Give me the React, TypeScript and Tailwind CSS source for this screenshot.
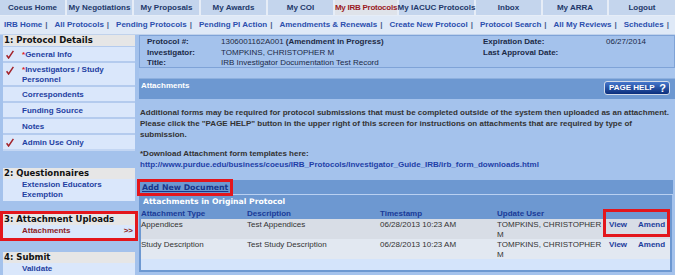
import React from "react";

const tabs: { label: string; w: string; active?: boolean }[] = [
  { label: "Coeus Home", w: "w-[67px]" },
  { label: "My Negotiations", w: "w-[67px]" },
  { label: "My Proposals", w: "w-[67px]" },
  { label: "My Awards", w: "w-[67px]" },
  { label: "My COI", w: "w-[67px]" },
  { label: "My IRB Protocols", w: "w-[64px]", active: true },
  { label: "My IACUC Protocols", w: "w-[77px]" },
  { label: "Inbox", w: "w-[67px]" },
  { label: "My ARRA", w: "w-[66px]" },
  { label: "Logout", w: "w-[66px]" },
];

const links = [
  "IRB Home",
  "All Protocols",
  "Pending Protocols",
  "Pending PI Action",
  "Amendments & Renewals",
  "Create New Protocol",
  "Protocol Search",
  "All My Reviews",
  "Schedules",
];

function Check() {
  return (
    <svg width="8" height="9" viewBox="0 0 8 9" className="block">
      <path d="M0.6 5.2 L2.6 8 L7.4 0.8" fill="none" stroke="#a3222a" strokeWidth="1.5" />
    </svg>
  );
}

function Item({
  children,
  check,
  two,
  className = "",
}: {
  children: React.ReactNode;
  check?: boolean;
  two?: boolean;
  className?: string;
}) {
  return (
    <div
      className={
        "flex bg-[#dae7fb] font-bold text-[#1f3fa2] " +
        (two ? "pt-[2px] leading-[10px] " : "pt-[2px] pb-[1px] leading-[11px] ") +
        className
      }
    >
      <div className="flex w-[19px] shrink-0 pl-[3px] pt-[1px]">{check ? <Check /> : null}</div>
      <div className="min-w-0 flex-1">{children}</div>
    </div>
  );
}

function Sep() {
  return <div className="h-[2px] bg-[#b4cbee]" />;
}

function Header({ children }: { children: React.ReactNode }) {
  return (
    <div className="h-[11px] bg-[#e6e6e6] pl-[1px] font-['DejaVu_Sans'] text-[8.5px] font-bold leading-[11px] text-[#111]">
      {children}
    </div>
  );
}

export default function App() {
  return (
    <div className="h-[275px] w-[675px] overflow-hidden bg-[#a4c2ec] font-['Liberation_Sans',Arial,sans-serif] text-[8px]">
      {/* top tabs */}
      <div className="flex h-[16px] bg-[#e6edf7]">
        {tabs.map((t, i) => (
          <div
            key={t.label}
            className={
              t.w +
              " flex h-[15px] shrink-0 items-center justify-center whitespace-nowrap font-bold " +
              (i < tabs.length - 1 ? "border-r-2 border-[#e6edf7] " : "") +
              (t.active ? "bg-[#dfe3ea] text-[#9b1b1f] tracking-[-0.25px]" : "bg-[#c4d5ed] text-[#22386a]")
            }
          >
            {t.label}
          </div>
        ))}
      </div>
      {/* links row */}
      <div className="flex h-[19px] items-center border-b border-[#c0d2ec] bg-[#dfe9f7] pl-[4px] font-bold text-[#2c4fae]">
        {links.map((l) => (
          <React.Fragment key={l}>
            <span className="whitespace-nowrap">{l}</span>
            <span className="ml-[3px] mr-[7px] text-[#4b5f8e]">|</span>
          </React.Fragment>
        ))}
      </div>

      <div className="flex">
        {/* sidebar */}
        <div className="w-[139px] shrink-0 pl-[3px] pr-[4px]">
          <Header>1: Protocol Details</Header>
          <div className="h-[1px] bg-[#b4cbee]" />
          <Item check>
            <span className="text-[#e0201f]">*</span>General Info
          </Item>
          <Sep />
          <Item check two className="h-[22px]">
            <span className="text-[#e0201f]">*</span>Investigators / Study
            <br />
            Personnel
          </Item>
          <Sep />
          <Item>Correspondents</Item>
          <Sep />
          <Item>Funding Source</Item>
          <Sep />
          <Item>Notes</Item>
          <Sep />
          <Item check>Admin Use Only</Item>
          <div className="h-[2px] bg-[#c3d6f3]" />

          <div className="mt-[17px]">
            <Header>2: Questionnaires</Header>
            <div className="bg-[#dae7fb] pb-[1px] pl-[19px] pt-[1px] font-bold leading-[10px] text-[#1f3fa2]">
              Extension Educators
              <br />
              Exemption
            </div>
          </div>

          <div className="relative z-10 mt-[13px] ring-[3px] ring-[#e3161c]">
            <Header>3: Attachment Uploads</Header>
            <div className="flex bg-[#dae7fb] pb-[2px] pl-[19px] pr-[2px] font-bold leading-[11px] text-[#8a1c1f]">
              <span className="flex-1">Attachments</span>
              <span>&gt;&gt;</span>
            </div>
          </div>

          <div className="mt-[14px]">
            <Header>4: Submit</Header>
            <div className="h-[20px] bg-[#dae7fb] pl-[19px] font-bold leading-[11px] text-[#1f3fa2]">Validate</div>
          </div>
        </div>

        {/* main */}
        <div className="flex w-[536px] flex-col">
          {/* info box */}
          <div className="grid h-[33px] grid-cols-[74px_262px_123px_1fr] border border-[#7fa3d7] bg-[#a4c2ec] pl-[7px] pt-[1px] leading-[10.5px] text-[#1b2a48]">
            <span className="font-bold">Protocol #:</span>
            <span className="text-[#1e2a44]">
              1306001162A001 <span className="font-bold">(Amendment in Progress)</span>
            </span>
            <span className="font-bold">Expiration Date:</span>
            <span>06/27/2014</span>
            <span className="font-bold">Investigator:</span>
            <span>TOMPKINS, CHRISTOPHER M</span>
            <span className="font-bold">Last Approval Date:</span>
            <span></span>
            <span className="font-bold">Title:</span>
            <span>IRB Investigator Documentation Test Record</span>
            <span></span>
            <span></span>
          </div>
          <div className="h-[11px] border-b border-[#8eb0de] bg-[#a9c6ee]" />

          {/* attachments header */}
          <div className="flex h-[20px] items-start justify-between bg-[#6d98d1] pl-[2px] pr-[5px]">
            <span className="pt-[2px] font-bold leading-[10px] text-white">Attachments</span>
            <div className="mt-[2px] flex h-[14px] w-[66px] items-center justify-between rounded-[3px] border border-[#d2dbea] bg-linear-to-b from-[#4677cc] to-[#0c2e7c] pl-[4px] pr-[3px]">
              <span className="font-bold leading-none text-white">PAGE HELP</span>
              <span className="text-[11px] font-bold leading-none text-white">?</span>
            </div>
          </div>

          {/* paragraph */}
          <div className="h-[81px] pl-[1px] pt-[8px] font-bold leading-[11px] text-[#333]">
            <p className="whitespace-nowrap">
              Additional forms may be required for protocol submissions that must be completed outside of the system then uploaded as an attachment.
            </p>
            <p className="whitespace-nowrap">
              Please click the "PAGE HELP" button in the upper right of this screen for instructions on attachments that are required by type of
            </p>
            <p>submission.</p>
            <p className="mt-[8px]">*Download Attachment form templates here:</p>
            <p className="text-[#1f3fa8]">http://www.purdue.edu/business/coeus/IRB_Protocols/Investigator_Guide_IRB/irb_form_downloads.html</p>
          </div>

          {/* add new document */}
          <div className="mr-[2px] h-[15px] border-b border-[#b9d0f1] bg-[#6d98d1]">
            <span className="relative z-10 ml-[1px] mt-[2px] inline-block px-[2px] font-['DejaVu_Sans'] text-[7.8px] font-bold leading-[11px] text-[#17368c] underline ring-[3px] ring-[#e3161c]">
              Add New Document
            </span>
          </div>

          {/* table */}
          <div className="relative mr-[3px] border-x-2 border-b-2 border-[#6d98d1] bg-[#d4e4fb]">
            <div className="h-[13px] bg-[#6d98d1] pl-[2px] font-['DejaVu_Sans'] text-[7.7px] font-bold leading-[13px] text-white">
              Attachments in Original Protocol
            </div>
            <div className="grid h-[11px] grid-cols-[106px_133px_117px_112px_29px_1fr] bg-[#6d98d1] font-bold leading-[11px] text-[#1a3b98]">
              <span>Attachment Type</span>
              <span>Description</span>
              <span>Timestamp</span>
              <span>Update User</span>
              <span></span>
              <span></span>
            </div>
            <div className="grid h-[20px] grid-cols-[106px_133px_117px_112px_29px_1fr] bg-[#d8dde6] pt-[1px] leading-[10px] text-[#333]">
              <span>Appendices</span>
              <span>Test Appendices</span>
              <span>06/28/2013 10:23 AM</span>
              <span>
                TOMPKINS, CHRISTOPHER
                <br />M
              </span>
              <span className="font-bold text-[#1d3d9c]">View</span>
              <span className="font-bold text-[#1d3d9c]">Amend</span>
            </div>
            <div className="grid h-[20px] grid-cols-[106px_133px_117px_112px_29px_1fr] bg-[#e2e8f1] pt-[1px] leading-[10px] text-[#333]">
              <span>Study Description</span>
              <span>Test Study Description</span>
              <span>06/28/2013 10:23 AM</span>
              <span>
                TOMPKINS, CHRISTOPHER
                <br />M
              </span>
              <span className="font-bold text-[#1d3d9c]">View</span>
              <span className="font-bold text-[#1d3d9c]">Amend</span>
            </div>
            <div className="h-[11px]" />
            <div className="absolute left-[462px] top-[14px] h-[28px] w-[67px] border-[3px] border-[#e3161c]" />
          </div>
        </div>
      </div>
    </div>
  );
}
